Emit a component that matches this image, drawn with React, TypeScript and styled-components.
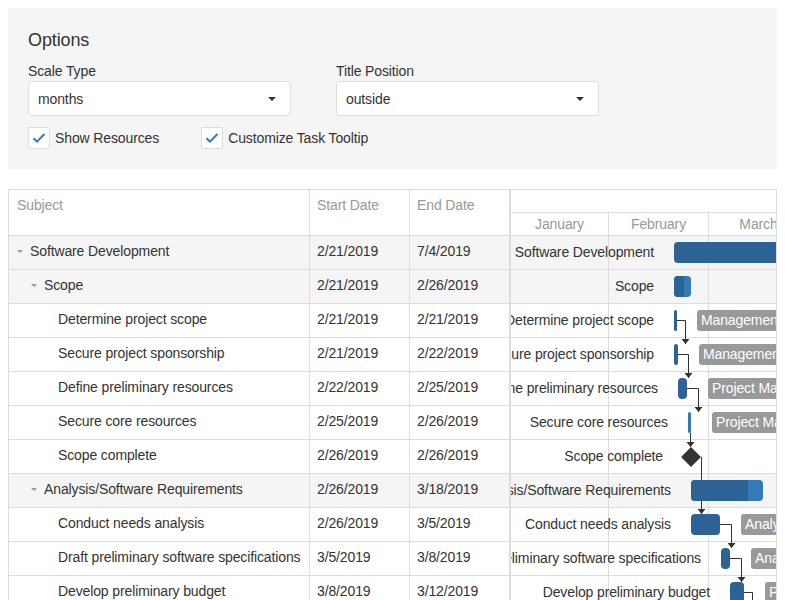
import React from "react";
import styled, { createGlobalStyle } from "styled-components";

const GlobalStyle = createGlobalStyle`
  body {
    margin: 8px;
    font-family: "Liberation Sans", Arial, Helvetica, sans-serif;
    font-size: 14px;
    letter-spacing: -0.12px;
    color: #333;
    background: #fff;
  }
`;

const ROW_H = 34;

type Task = {
  title: string;
  start: string;
  end: string;
  level: number;
  parent?: boolean;
  x: number;
  w: number;
  progress: number;
  milestone?: boolean;
  resource?: string;
  resX?: number;
};

const tasks: Task[] = [
  { title: "Software Development", start: "2/21/2019", end: "7/4/2019", level: 0, parent: true, x: 163, w: 220, progress: 220 },
  { title: "Scope", start: "2/21/2019", end: "2/26/2019", level: 1, parent: true, x: 163, w: 17, progress: 10 },
  { title: "Determine project scope", start: "2/21/2019", end: "2/21/2019", level: 2, x: 163, w: 3, progress: 3, resource: "Management", resX: 186 },
  { title: "Secure project sponsorship", start: "2/21/2019", end: "2/22/2019", level: 2, x: 163, w: 4, progress: 4, resource: "Management", resX: 188 },
  { title: "Define preliminary resources", start: "2/22/2019", end: "2/25/2019", level: 2, x: 167, w: 9, progress: 9, resource: "Project Manager", resX: 197 },
  { title: "Secure core resources", start: "2/25/2019", end: "2/26/2019", level: 2, x: 177, w: 3, progress: 0, resource: "Project Manager", resX: 201 },
  { title: "Scope complete", start: "2/26/2019", end: "2/26/2019", level: 2, x: 180, w: 0, progress: 0, milestone: true },
  { title: "Analysis/Software Requirements", start: "2/26/2019", end: "3/18/2019", level: 1, parent: true, x: 180, w: 72, progress: 57 },
  { title: "Conduct needs analysis", start: "2/26/2019", end: "3/5/2019", level: 2, x: 180, w: 29, progress: 29, resource: "Analyst", resX: 230 },
  { title: "Draft preliminary software specifications", start: "3/5/2019", end: "3/8/2019", level: 2, x: 210, w: 9, progress: 9, resource: "Analyst", resX: 240 },
  { title: "Develop preliminary budget", start: "3/8/2019", end: "3/12/2019", level: 2, x: 219, w: 14, progress: 14, resource: "Project Manager", resX: 254 },
];

const months = [
  { name: "January", w: 97 },
  { name: "February", w: 99 },
  { name: "March", w: 99 },
];

// dependency lines, chart coordinates: [points], arrow tip is the last point
const links: number[][][] = [
  [[166, 84.5], [174.5, 84.5], [174.5, 108]],
  [[167, 118.5], [177.5, 118.5], [177.5, 142]],
  [[176, 152.5], [187.5, 152.5], [187.5, 176]],
  [[179.5, 197], [179.5, 211]],
  [[190.5, 221], [190.5, 278]],
  [[209, 288.5], [220.5, 288.5], [220.5, 312]],
  [[219, 322.5], [230.5, 322.5], [230.5, 346]],
  [[233, 356.5], [241.5, 356.5], [241.5, 380]],
];

/* ---------- options panel ---------- */

const Panel = styled.div`
  background: #f5f5f5;
  padding: 20px;
`;

const PanelTitle = styled.div`
  font-size: 18px;
  line-height: 24px;
  margin-bottom: 10px;
`;

const Fields = styled.div`
  display: flex;
  gap: 45px;
`;

const Field = styled.div`
  width: 263px;
`;

const FieldLabel = styled.div`
  line-height: 18px;
  margin-bottom: 1px;
`;

const Select = styled.div`
  height: 35px;
  box-sizing: border-box;
  border: 1px solid #ddd;
  border-radius: 4px;
  background: #fff;
  display: flex;
  align-items: center;
  justify-content: space-between;
  padding: 0 14px 0 9px;
`;

const Caret = styled.span`
  width: 0;
  height: 0;
  border-left: 4px solid transparent;
  border-right: 4px solid transparent;
  border-top: 4px solid #333;
`;

const Checks = styled.div`
  display: flex;
  gap: 42px;
  margin-top: 11px;
`;

const CheckItem = styled.label`
  display: flex;
  align-items: center;
  gap: 5px;
  line-height: 22px;
`;

const CheckBox = styled.span`
  width: 22px;
  height: 22px;
  box-sizing: border-box;
  border: 1px solid #ddd;
  border-radius: 2px;
  background: #fff;
  display: flex;
  align-items: center;
  justify-content: center;
`;

const Check = () => (
  <CheckBox>
    <svg width="14" height="12" viewBox="0 0 14 12">
      <path d="M1.5 6.2 L5 9.6 L12.5 2" fill="none" stroke="#337ab7" strokeWidth="2" />
    </svg>
  </CheckBox>
);

/* ---------- gantt ---------- */

const Gantt = styled.div`
  margin-top: 20px;
  border: 1px solid #ddd;
  display: flex;
  overflow: hidden;
`;

const Tree = styled.div`
  width: 501px;
  flex: 0 0 501px;
`;

const TreeRow = styled.div<{ $shade?: boolean; $head?: boolean }>`
  display: grid;
  grid-template-columns: 301px 100px 100px;
  height: ${(p) => (p.$head ? 46 : ROW_H)}px;
  box-sizing: border-box;
  border-bottom: 1px solid #ddd;
  background: ${(p) => (p.$shade ? "#f5f5f5" : "#fff")};
  color: ${(p) => (p.$head ? "#999" : "#333")};
`;

const Cell = styled.div<{ $head?: boolean }>`
  border-right: 1px solid #ddd;
  padding: ${(p) => (p.$head ? "6px 7px 0" : "0 7px")};
  line-height: ${(p) => (p.$head ? "18px" : "31px")};
  white-space: nowrap;
  overflow: hidden;
`;

const SubjectCell = styled(Cell)<{ $level: number }>`
  display: flex;
  align-items: flex-start;
  padding-left: ${(p) => 8 + p.$level * 14}px;
`;

const Expander = styled.span`
  flex: 0 0 13px;
  height: 31px;
  display: flex;
  align-items: center;
`;

const ExpandArrow = styled.span`
  width: 0;
  height: 0;
  border-left: 3.5px solid transparent;
  border-right: 3.5px solid transparent;
  border-top: 3.5px solid #999;
`;

const Chart = styled.div`
  flex: 1;
  border-left: 1px solid #ddd;
  overflow: hidden;
`;

const ScaleTop = styled.div`
  height: 23px;
  box-sizing: border-box;
  border-bottom: 1px solid #ddd;
`;

const ChartRow = styled.div<{ $shade?: boolean; $h: number }>`
  display: flex;
  height: ${(p) => p.$h}px;
  box-sizing: border-box;
  border-bottom: 1px solid #ddd;
  background: ${(p) => (p.$shade ? "#f5f5f5" : "#fff")};
`;

const ChartCell = styled.div<{ $w: number }>`
  flex: 0 0 ${(p) => p.$w}px;
  border-right: 1px solid #ddd;
  text-align: center;
  line-height: 22px;
  color: #999;
  white-space: nowrap;
`;

const ChartBody = styled.div`
  position: relative;
`;

const Canvas = styled.div`
  position: absolute;
  inset: 0;
`;

const Links = styled.svg`
  position: absolute;
  left: 0;
  top: 0;
`;

const Bar = styled.div<{ $thin?: boolean }>`
  position: absolute;
  height: 21px;
  border-radius: ${(p) => (p.$thin ? 2 : 4)}px;
  background: #337ab7;
  overflow: hidden;
`;

const Progress = styled.div`
  height: 100%;
  background: #2c6294;
`;

const Diamond = styled.div`
  position: absolute;
  width: 14px;
  height: 14px;
  background: #333;
  transform: rotate(45deg);
`;

const Title = styled.div`
  position: absolute;
  line-height: 21px;
  white-space: nowrap;
  color: #333;
`;

const Resource = styled.div`
  position: absolute;
  height: 21px;
  line-height: 21px;
  padding: 0 4px;
  border-radius: 3px;
  background: #999;
  color: #fff;
  white-space: nowrap;
`;

const CHART_W = 265;

const App = () => (
  <>
    <GlobalStyle />
    <Panel>
      <PanelTitle>Options</PanelTitle>
      <Fields>
        <Field>
          <FieldLabel>Scale Type</FieldLabel>
          <Select>
            <span>months</span>
            <Caret />
          </Select>
        </Field>
        <Field>
          <FieldLabel>Title Position</FieldLabel>
          <Select>
            <span>outside</span>
            <Caret />
          </Select>
        </Field>
      </Fields>
      <Checks>
        <CheckItem>
          <Check />
          Show Resources
        </CheckItem>
        <CheckItem>
          <Check />
          Customize Task Tooltip
        </CheckItem>
      </Checks>
    </Panel>

    <Gantt>
      <Tree>
        <TreeRow $head>
          <Cell $head style={{ paddingLeft: 8 }}>Subject</Cell>
          <Cell $head>Start Date</Cell>
          <Cell $head>End Date</Cell>
        </TreeRow>
        {tasks.map((t) => (
          <TreeRow key={t.title} $shade={t.parent}>
            <SubjectCell $level={t.level}>
              <Expander>{t.parent && <ExpandArrow />}</Expander>
              {t.title}
            </SubjectCell>
            <Cell>{t.start}</Cell>
            <Cell>{t.end}</Cell>
          </TreeRow>
        ))}
      </Tree>

      <Chart>
        <ScaleTop />
        <ChartRow $h={23}>
          {months.map((m) => (
            <ChartCell key={m.name} $w={m.w}>
              {m.name}
            </ChartCell>
          ))}
        </ChartRow>
        <ChartBody>
          {tasks.map((t) => (
            <ChartRow key={t.title} $shade={t.parent} $h={ROW_H}>
              {months.map((m) => (
                <ChartCell key={m.name} $w={m.w} />
              ))}
            </ChartRow>
          ))}
          <Canvas>
            <Links width={CHART_W} height={tasks.length * ROW_H}>
              {links.map((pts, i) => {
                const [tx, ty] = pts[pts.length - 1];
                return (
                  <g key={i}>
                    <polyline
                      points={pts.map((p) => p.join(",")).join(" ")}
                      fill="none"
                      stroke="#333"
                      strokeWidth="1"
                    />
                    <polygon points={`${tx - 4},${ty - 5} ${tx + 4},${ty - 5} ${tx},${ty}`} fill="#333" />
                  </g>
                );
              })}
            </Links>
            {tasks.map((t, i) => {
              const top = i * ROW_H + 6;
              const titleEnd = t.milestone ? t.x - 28 : t.x - 20;
              return (
                <React.Fragment key={t.title}>
                  <Title style={{ top, right: CHART_W - titleEnd }}>{t.title}</Title>
                  {t.milestone ? (
                    <Diamond style={{ left: t.x - 7, top: i * ROW_H + 9.5 }} />
                  ) : (
                    <Bar $thin={t.w < 6} style={{ left: t.x, top, width: t.w }}>
                      <Progress style={{ width: t.progress }} />
                    </Bar>
                  )}
                  {t.resource && <Resource style={{ left: t.resX, top }}>{t.resource}</Resource>}
                </React.Fragment>
              );
            })}
          </Canvas>
        </ChartBody>
      </Chart>
    </Gantt>
  </>
);

export default App;
